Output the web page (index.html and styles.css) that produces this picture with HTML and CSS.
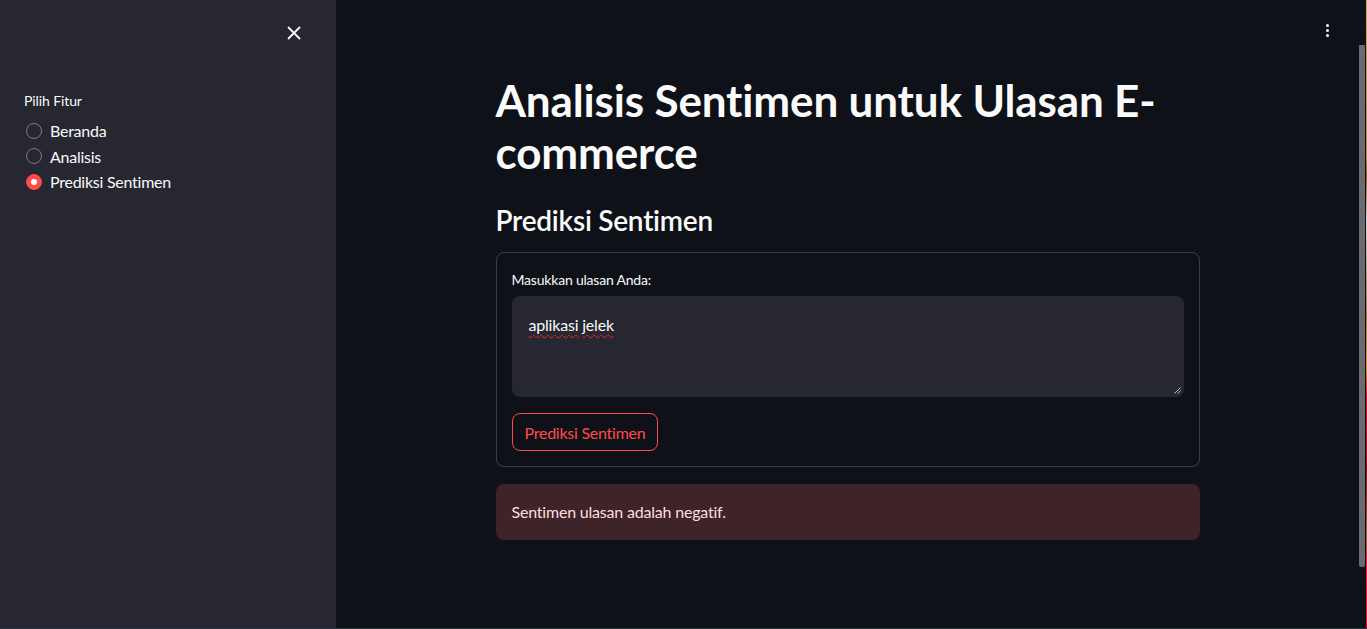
FILE: index.html
```html
<!DOCTYPE html>
<html lang="id">
<head>
<meta charset="utf-8">
<title>Analisis Sentimen</title>
<link rel="stylesheet" href="styles.css">
</head>
<body>
<div class="app">
  <aside class="sidebar">
    <div class="sidebar-top">
      <button class="close-btn" aria-label="Tutup">
        <svg width="14" height="14" viewBox="0 0 14 14"><path d="M1.5 1.5L12.5 12.5M12.5 1.5L1.5 12.5" stroke="#fafafa" stroke-width="1.8" stroke-linecap="round"/></svg>
      </button>
    </div>
    <div class="radio-group">
      <div class="radio-label">Pilih Fitur</div>
      <label class="radio"><span class="dot"></span><span>Beranda</span></label>
      <label class="radio"><span class="dot"></span><span>Analisis</span></label>
      <label class="radio checked"><span class="dot"></span><span>Prediksi Sentimen</span></label>
    </div>
  </aside>
  <main class="main">
    <header class="topbar">
      <span class="kebab"><i></i><i></i><i></i></span>
    </header>
    <div class="body-row">
      <section class="content">
        <h1 class="title">Analisis Sentimen untuk Ulasan E-commerce</h1>
        <h2 class="subtitle">Prediksi Sentimen</h2>
        <div class="form">
          <div class="field-label">Masukkan ulasan Anda:</div>
          <div class="textarea">
            <span class="typed"><span class="misspelled">aplikasi</span> <span class="misspelled">jelek</span></span>
            <svg class="grip" width="7" height="7" viewBox="0 0 7 7"><path d="M6.5 0.5L0.5 6.5M6.5 3.5L3.5 6.5" stroke="#bbb" stroke-width="1"/></svg>
          </div>
          <button class="btn">Prediksi Sentimen</button>
        </div>
        <div class="alert">Sentimen ulasan adalah negatif.</div>
      </section>
      <div class="scroll-track"><div class="scroll-thumb"></div></div>
    </div>
  </main>
  <div class="edge"></div>
</div>
</body>
</html>
```

FILE: styles.css
```css
* { box-sizing: border-box; }
html, body { margin: 0; padding: 0; height: 100%; }
body {
  background: #0e1117;
  color: #fafafa;
  font-family: "Source Sans Pro", "Lato", "Noto Sans", sans-serif;
  overflow: hidden;
}
.app {
  display: flex;
  height: 629px;
  border-bottom: 1px solid #2b3340;
}
.sidebar {
  width: 336px;
  flex: none;
  background: #262730;
  padding: 0 24px;
}
.sidebar-top {
  height: 66px;
  display: flex;
  justify-content: flex-end;
  align-items: center;
  padding-right: 11px;
}
.close-btn {
  background: none;
  border: 0;
  padding: 0;
  width: 14px;
  height: 14px;
  display: flex;
}
.radio-group { padding-top: 25px; }
.radio-label {
  font-size: 14px;
  line-height: 20px;
  margin-bottom: 7px;
  letter-spacing: -0.1px;
}
.radio {
  display: flex;
  align-items: center;
  height: 25.5px;
  font-size: 16px;
  gap: 8px;
  color: #fafafa;
  letter-spacing: -0.25px;
}
.dot {
  width: 16px;
  height: 16px;
  border-radius: 50%;
  border: 1px solid rgba(250, 250, 250, 0.4);
  margin-left: 2px;
  flex: none;
  display: flex;
  align-items: center;
  justify-content: center;
}
.radio.checked .dot {
  background: #ff4b4b;
  border-color: #ff4b4b;
}
.radio.checked .dot::after {
  content: "";
  width: 6px;
  height: 6px;
  border-radius: 50%;
  background: #fff;
}
.main {
  flex: 1;
  display: flex;
  flex-direction: column;
  min-width: 0;
}
.topbar {
  height: 45px;
  display: flex;
  justify-content: flex-end;
  align-items: flex-start;
  padding: 24px 37px 0 0;
}
.kebab {
  display: flex;
  flex-direction: column;
  gap: 2px;
}
.kebab i {
  width: 3px;
  height: 3px;
  border-radius: 50%;
  background: #fafafa;
  display: block;
}
.body-row {
  flex: 1;
  display: flex;
}
.content {
  flex: 1;
  display: flex;
  flex-direction: column;
  align-items: center;
  padding-top: 29px;
}
.content > * { width: 704px; }
.title {
  margin: 0;
  font-size: 44px;
  line-height: 52px;
  font-weight: 700;
  letter-spacing: -0.15px;
}
.subtitle {
  margin: 25px 0 0;
  font-size: 28px;
  line-height: 34px;
  font-weight: 600;
  letter-spacing: -0.25px;
}
.form {
  margin-top: 15px;
  border: 1px solid rgba(250, 250, 250, 0.2);
  border-radius: 8px;
  padding: 16px 15px 15px;
}
.field-label {
  font-size: 14px;
  line-height: 21px;
  margin-bottom: 6px;
  letter-spacing: -0.2px;
}
.textarea {
  position: relative;
  height: 101px;
  background: #262730;
  border-radius: 8px;
  padding: 17px 17px;
  font-size: 16px;
  line-height: 24px;
  letter-spacing: -0.2px;
}
.misspelled {
  text-decoration: underline wavy #e0262a;
  text-decoration-thickness: 1px;
  text-underline-offset: 3px;
}
.grip {
  position: absolute;
  right: 3px;
  bottom: 3px;
}
.btn {
  margin-top: 16px;
  height: 38px;
  padding: 0 12px;
  background: transparent;
  border: 1px solid #ff4b4b;
  border-radius: 8px;
  color: #ff4b4b;
  font-family: inherit;
  font-size: 16px;
  letter-spacing: -0.25px;
}
.alert {
  margin-top: 17px;
  height: 56px;
  padding: 16px;
  background: #3e2328;
  border-radius: 8px;
  color: #ffdede;
  font-size: 16px;
  line-height: 24px;
  letter-spacing: -0.2px;
}
.scroll-track {
  width: 7px;
  flex: none;
  padding-right: 1px;
}
.scroll-thumb {
  height: 522px;
  background: #6b6b6f;
  border-radius: 0 0 2px 2px;
}
.edge {
  width: 1px;
  flex: none;
  background: linear-gradient(#c9a87a 0%, #b58e5a 25%, #8a5a2a 28%, #d8d8d8 35%, #9a7a50 50%, #d4a030 58%, #e01040 63%, #a00820 75%, #8a6a40 85%, #ff1050 90%, #e0103a 100%);
}
```
